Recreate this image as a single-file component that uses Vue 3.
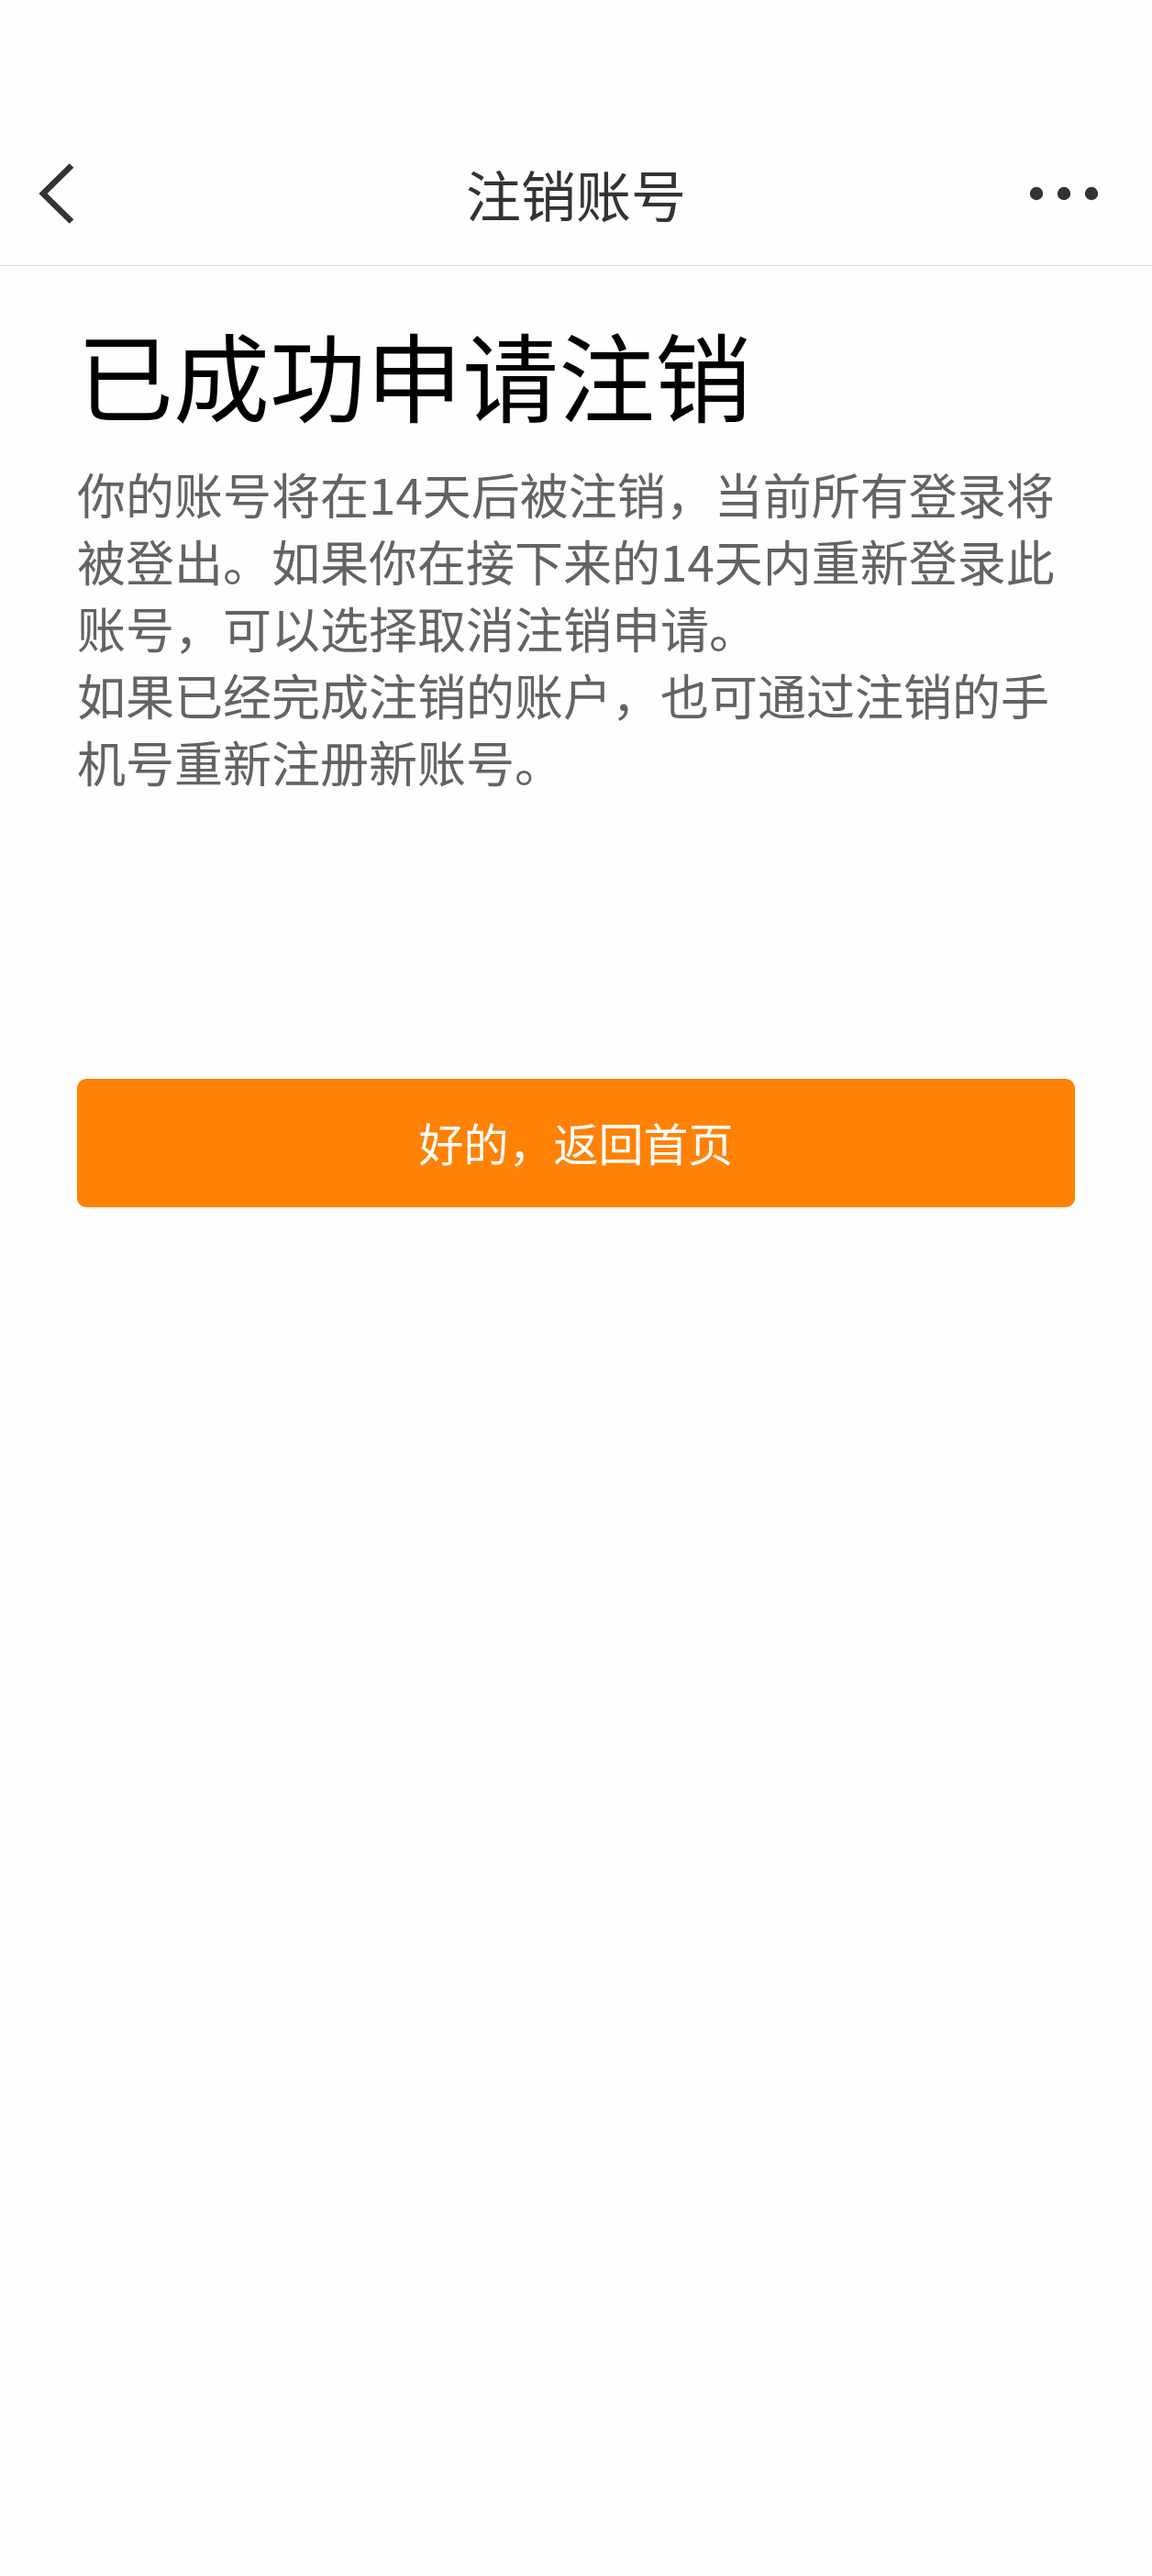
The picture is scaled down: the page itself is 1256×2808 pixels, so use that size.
<script setup>
const paragraphs = [
  '你的账号将在14天后被注销，当前所有登录将被登出。如果你在接下来的14天内重新登录此账号，可以选择取消注销申请。',
  '如果已经完成注销的账户，也可通过注销的手机号重新注册新账号。',
]
</script>

<template>
  <div class="page">
    <header class="bar">
      <button class="icon" type="button" aria-label="返回">
        <svg width="40" height="68" viewBox="0 0 40 68" fill="none" stroke="#333" stroke-width="6.6">
          <path d="M36 3.5 5 34l31 30.5" />
        </svg>
      </button>
      <h1 class="title">注销账号</h1>
      <button class="icon more" type="button" aria-label="更多">
        <svg width="76" height="16" viewBox="0 0 76 16" fill="#333">
          <circle cx="8" cy="8" r="7.2" />
          <circle cx="38" cy="8" r="7.2" />
          <circle cx="68" cy="8" r="7.2" />
        </svg>
      </button>
    </header>
    <main class="content">
      <h2 class="heading">已成功申请注销</h2>
      <p v-for="text in paragraphs" :key="text" class="text">{{ text }}</p>
      <button class="primary" type="button">好的，返回首页</button>
    </main>
  </div>
</template>

<style>
body {
  background: #fefefe;
}
</style>

<style scoped>
.page {
  display: flow-root;
  font-family: "Noto Sans CJK SC", sans-serif;
}
.bar {
  display: grid;
  grid-template-columns: 1fr auto 1fr;
  align-items: center;
  height: 156px;
  margin-top: 133px;
  padding: 0 42px;
  border-bottom: 1px solid #e0e0e0;
}
.icon {
  display: flex;
  justify-self: start;
  padding: 0;
  border: 0;
  background: none;
}
.more {
  justify-self: end;
  padding-right: 16px;
}
.title {
  margin: 0;
  font-size: 60px;
  line-height: 88px;
  font-weight: 400;
  color: #333;
}
.content {
  padding: 56px 84px;
}
.heading {
  margin: 0 0 36px;
  font-size: 105px;
  line-height: 120px;
  font-weight: 400;
  color: #000;
}
.text {
  margin: 0;
  font-size: 53px;
  line-height: 73px;
  color: #636363;
}
.primary {
  display: block;
  width: 100%;
  height: 140px;
  margin-top: 309px;
  padding: 0 0 4px;
  border: 0;
  border-radius: 10px;
  background: #ff8205;
  color: #fff;
  font-family: inherit;
  font-size: 49px;
}
</style>
